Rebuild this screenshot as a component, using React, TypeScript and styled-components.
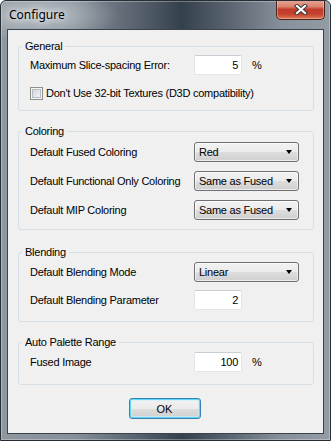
import React from "react"
import styled, { createGlobalStyle } from "styled-components"

const GlobalStyle = createGlobalStyle`
	html, body {
		margin: 0;
		padding: 0;
		background: #ffffff;
	}
	* {
		box-sizing: border-box;
	}
`

const UI_FONT = `"Liberation Sans", Arial, sans-serif`

export default function App() {
	return (
		<>
			<GlobalStyle />
			<Window>
				<TitleBar>
					<Title>Configure</Title>
					<CloseButton aria-label="Close">
						<svg width="14" height="11" viewBox="0 0 14 11">
							<path
								d="M3 2 L11 9 M11 2 L3 9"
								stroke="#3a3a3a"
								strokeWidth="4.2"
								strokeLinecap="square"
							/>
							<path
								d="M3 2 L11 9 M11 2 L3 9"
								stroke="#ffffff"
								strokeWidth="2.2"
								strokeLinecap="square"
							/>
						</svg>
					</CloseButton>
				</TitleBar>
				<Client>
					<Group $top={10} $pt={2} $pb={10}>
						<Legend>General</Legend>
						<Rows $gap={12}>
							<Row>
								<Label>Maximum Slice-spacing Error:</Label>
								<TextBox>5</TextBox>
								<Unit>%</Unit>
							</Row>
							<CheckRow>
								<CheckBox />
								<Label>Don't Use 32-bit Textures (D3D compatibility)</Label>
							</CheckRow>
						</Rows>
					</Group>

					<Group $top={14} $pt={4} $pb={9}>
						<Legend>Coloring</Legend>
						<Rows $gap={9}>
							<Row>
								<Label>Default Fused Coloring</Label>
								<Select value="Red" />
							</Row>
							<Row>
								<Label>Default Functional Only Coloring</Label>
								<Select value="Same as Fused" />
							</Row>
							<Row>
								<Label>Default MIP Coloring</Label>
								<Select value="Same as Fused" />
							</Row>
						</Rows>
					</Group>

					<Group $top={16} $pt={3} $pb={11}>
						<Legend>Blending</Legend>
						<Rows $gap={8}>
							<Row>
								<Label>Default Blending Mode</Label>
								<Select value="Linear" />
							</Row>
							<Row>
								<Label>Default Blending Parameter</Label>
								<TextBox>2</TextBox>
							</Row>
						</Rows>
					</Group>

					<Group $top={14} $pt={3} $pb={12}>
						<Legend>Auto Palette Range</Legend>
						<Rows $gap={0}>
							<Row>
								<Label>Fused Image</Label>
								<TextBox>100</TextBox>
								<Unit>%</Unit>
							</Row>
						</Rows>
					</Group>

					<Footer>
						<OkButton>OK</OkButton>
					</Footer>
				</Client>
			</Window>
		</>
	)
}

function Select({ value }: { value: string }) {
	return (
		<Combo>
			<span>{value}</span>
			<Arrow />
		</Combo>
	)
}

const Window = styled.div`
	width: 331px;
	height: 441px;
	display: flex;
	flex-direction: column;
	border: 1px solid #262d34;
	border-radius: 6px 6px 0 0;
	background:
		radial-gradient(ellipse 80px 26px at 38px 14px, rgba(235, 240, 244, 0.5), transparent),
		linear-gradient(
			to right,
			#8f989f 0%,
			#87909a 22%,
			#56616d 42%,
			#34404c 55%,
			#56616d 68%,
			#87909a 85%,
			#939ca4 100%
		);
	box-shadow: inset 0 0 0 1px rgba(255, 255, 255, 0.3);
	overflow: hidden;
`

const TitleBar = styled.div`
	height: 28px;
	display: flex;
	align-items: flex-start;
	justify-content: space-between;
	padding-left: 8px;
`

const Title = styled.div`
	margin-top: 6px;
	font-family: "Noto Sans", "Open Sans", sans-serif;
	font-size: 12px;
	line-height: 16px;
	color: #000000;
	text-shadow:
		0 0 6px rgba(255, 255, 255, 0.9),
		0 0 10px rgba(255, 255, 255, 0.7);
`

const CloseButton = styled.div`
	width: 49px;
	height: 20px;
	margin-top: -1px;
	margin-right: 5px;
	display: flex;
	align-items: center;
	justify-content: center;
	border: 1px solid #4a231d;
	border-top: none;
	border-radius: 0 0 5px 5px;
	background: linear-gradient(
		to bottom,
		#e7a899 0%,
		#d8826c 35%,
		#c0392a 50%,
		#c4442f 75%,
		#dd7a55 100%
	);
	box-shadow: inset 0 0 0 1px rgba(255, 210, 190, 0.45);
`

const Client = styled.div`
	flex: 1;
	margin: 0 6px 6px 6px;
	display: flex;
	flex-direction: column;
	background: #f0f0f0;
	border: 1px solid #3b444d;
	font-family: ${UI_FONT};
	font-size: 11px;
	letter-spacing: -0.25px;
	color: #000000;
`

const Group = styled.fieldset<{ $top: number; $pt: number; $pb: number }>`
	margin: ${p => p.$top}px 9px 0 10px;
	padding: ${p => p.$pt}px 0 ${p => p.$pb}px 3px;
	border: 1px solid #d5dfe5;
	border-radius: 3px;
	min-width: 0;
`

const Legend = styled.legend`
	padding: 0 3px;
	line-height: 13px;
	font-size: 11px;
`

const Rows = styled.div<{ $gap: number }>`
	display: flex;
	flex-direction: column;
	gap: ${p => p.$gap}px;
	padding-left: 8px;
`

const Row = styled.div`
	display: grid;
	grid-template-columns: 164px auto 1fr;
	align-items: center;
`

const CheckRow = styled.div`
	display: flex;
	align-items: center;
	gap: 3px;
	height: 13px;
`

const Label = styled.span`
	line-height: 13px;
	white-space: nowrap;
`

const TextBox = styled.div`
	grid-column: 2;
	width: 48px;
	height: 20px;
	padding-right: 3px;
	display: flex;
	align-items: center;
	justify-content: flex-end;
	background: #ffffff;
	border: 1px solid #e2e6ea;
	border-top-color: #c9ced4;
	border-radius: 2px;
`

const Unit = styled.span`
	margin-left: 10px;
	line-height: 13px;
`

const Combo = styled.div`
	grid-column: 2 / span 2;
	width: 105px;
	height: 20px;
	padding: 0 6px 0 4px;
	display: flex;
	align-items: center;
	justify-content: space-between;
	border: 1px solid #707070;
	border-radius: 3px;
	background: linear-gradient(
		to bottom,
		#f2f2f2 0%,
		#ebebeb 50%,
		#dddddd 51%,
		#cfcfcf 100%
	);
	box-shadow: inset 0 0 0 1px rgba(255, 255, 255, 0.6);
`

const Arrow = styled.span`
	width: 0;
	height: 0;
	border-left: 3.5px solid transparent;
	border-right: 3.5px solid transparent;
	border-top: 4px solid #000000;
`

const CheckBox = styled.span`
	width: 13px;
	height: 13px;
	flex: none;
	border: 1px solid #8e8f8f;
	background: linear-gradient(135deg, #c9ced4 0%, #e4e6e9 55%, #f6f6f6 100%);
	box-shadow: inset 0 0 0 1px #f4f4f4, inset 0 0 0 2px #b7bcc2;
`

const Footer = styled.div`
	display: flex;
	justify-content: center;
	margin-top: 13px;
	padding-right: 2px;
`

const OkButton = styled.div`
	width: 72px;
	height: 21px;
	display: flex;
	align-items: center;
	justify-content: center;
	border: 1px solid #3c7fb1;
	border-radius: 3px;
	background: linear-gradient(
		to bottom,
		#f2f2f2 0%,
		#ebebeb 50%,
		#dddddd 51%,
		#cfcfcf 100%
	);
	box-shadow: inset 0 0 0 1px #5ed8f8, inset 0 0 0 2px rgba(200, 240, 252, 0.6);
	letter-spacing: 0;
`
